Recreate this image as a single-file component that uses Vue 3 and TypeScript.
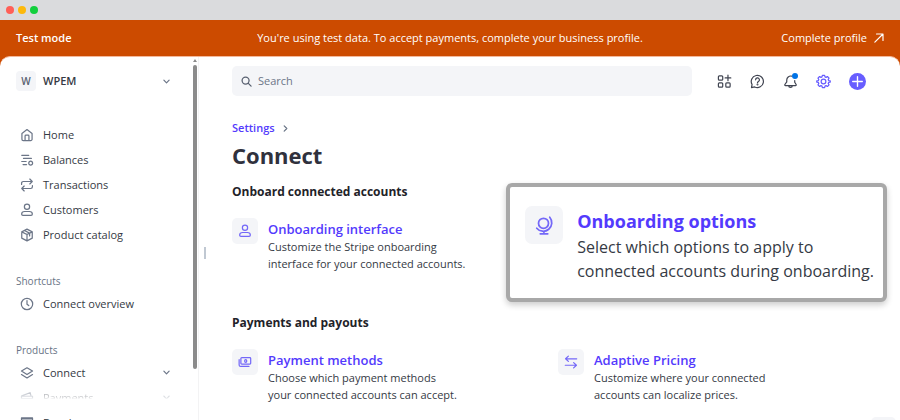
<script setup lang="ts">
import { ref } from 'vue'

interface NavItem {
  label: string
  icon: string
  expandable?: boolean
}

const icons: Record<string, string> = {
  home: 'M2.2 6.2 8 1.8l5.8 4.4v6.6a1.5 1.5 0 0 1-1.5 1.5H3.7a1.5 1.5 0 0 1-1.5-1.5zM5.8 14V9.2a1 1 0 0 1 1-1h2.4a1 1 0 0 1 1 1V14',
  balances: 'M2 2.7h8M4 6.2h9M2 9.7h5M3.5 13.2h4M14.4 11.6a2.2 2.2 0 1 1-4.4 0a2.2 2.2 0 1 1 4.4 0',
  transactions: 'M1.8 7.3V6a2 2 0 0 1 2-2h10M11.2 1.2 14 4l-2.8 2.8M14.2 8.7V10a2 2 0 0 1-2 2h-10M4.8 9.2 2 12l2.8 2.8',
  customer: 'M11 4.4a3 3 0 1 1-6 0a3 3 0 1 1 6 0M1.9 12.7c0-2 1.5-3 3.4-3h5.4c1.9 0 3.4 1 3.4 3c0 .9-.6 1.4-1.4 1.4H3.3c-.8 0-1.4-.5-1.4-1.4z',
  catalog: 'm8 1.3 6 3.1v7.2l-6 3.1-6-3.1V4.4zM2 4.4l6 3 6-3M8 7.4v7.1M5 2.9l6 3V9',
  clock: 'M14.5 8a6.5 6.5 0 1 1-13 0a6.5 6.5 0 1 1 13 0M8 4v4.2l2 1.6',
  layers: 'm8 2 6.3 3.8L8 9.6 1.7 5.8zM1.7 9.8 8 13.7l6.3-3.9',
  wallet: 'M2 5.5 11.5 2l1 3.3M1.7 6h12.6v7.5H1.7zM1.7 8.7h12.6',
  card: 'M1.7 2.2h12.6v11H1.7zM1.7 3h12.6M1.7 5h12.6',
  cash: 'M4.3 3h9.2a1 1 0 0 1 1 1v5.5a1 1 0 0 1-1 1H4.3a1 1 0 0 1-1-1V4a1 1 0 0 1 1-1M1.3 5.3v6a1.7 1.7 0 0 0 1.7 1.7h9.5M10 6.8a1.2 1.5 0 1 1-2.4 0a1.2 1.5 0 1 1 2.4 0',
  swap: 'M14.5 4.3H1.8M5 1.3 1.8 4.3l3.2 3M1.5 11.7h12.7M11 8.7l3.2 3-3.2 3',
  globe: 'M11.6 6.6a4 4 0 1 1-8 0a4 4 0 1 1 8 0M12.6 1.8A6.8 6.8 0 0 1 2.2 10.6M8 13v1.8M5 15h6',
}

const mainNav: NavItem[] = [
  { label: 'Home', icon: 'home' },
  { label: 'Balances', icon: 'balances' },
  { label: 'Transactions', icon: 'transactions' },
  { label: 'Customers', icon: 'customer' },
  { label: 'Product catalog', icon: 'catalog' },
]
const shortcuts: NavItem[] = [{ label: 'Connect overview', icon: 'clock' }]
const products: NavItem[] = [
  { label: 'Connect', icon: 'layers', expandable: true },
  { label: 'Payments', icon: 'wallet', expandable: true },
]
const groups = [
  { title: '', items: mainNav },
  { title: 'Shortcuts', items: shortcuts },
  { title: 'Products', items: products },
]
const query = ref('')
</script>

<template>
  <div class="window">
    <div class="chrome"><i class="red"></i><i class="yellow"></i><i class="green"></i></div>
    <header class="banner">
      <strong>Test mode</strong>
      <span class="notice">You're using test data. To accept payments, complete your business profile.</span>
      <a href="#profile">Complete profile
        <svg viewBox="0 0 12 12" width="10" height="10"><path d="M1 11 10.5 1.5M3 1.2h7.8V9" /></svg>
      </a>
    </header>
    <div class="app">
      <aside class="sidebar">
        <button class="account" type="button">
          <span class="avatar">W</span><span class="name">WPEM</span>
          <svg class="chev" viewBox="0 0 8 8" width="7" height="7"><path d="m1 2.5 3 3 3-3" /></svg>
        </button>
        <nav>
          <div v-for="group in groups" :key="group.title" class="group">
            <h2 v-if="group.title">{{ group.title }}</h2>
            <a v-for="item in group.items" :key="item.label" href="#nav" :class="{ fading: item.label === 'Payments' }">
              <svg viewBox="0 0 16 16" width="14" height="14"><path :d="icons[item.icon]" /></svg>
              <span>{{ item.label }}</span>
              <svg v-if="item.expandable" class="chev" viewBox="0 0 8 8" width="7" height="7"><path d="m1 2.5 3 3 3-3" /></svg>
            </a>
          </div>
        </nav>
        <a class="developers" href="#developers">
          <svg viewBox="0 0 16 16" width="14" height="14"><path :d="icons.card" /></svg>
          <span>Developers</span>
        </a>
      </aside>
      <div class="scrollbar"><span class="arrow"></span><span class="thumb"></span></div>
      <div class="splitter"></div>
      <main>
        <div class="toolbar">
          <label class="search">
            <svg viewBox="0 0 12 12" width="11" height="11"><circle cx="5" cy="5" r="3.8" /><path d="m8 8 3 3" /></svg>
            <input v-model="query" type="search" placeholder="Search" aria-label="Search" />
          </label>
          <div class="actions">
            <button type="button" aria-label="Apps">
              <svg viewBox="0 0 16 16" width="15" height="15"><rect x="1.5" y="2" width="4.6" height="4.6" rx="1" /><rect x="1.5" y="9.4" width="4.6" height="4.6" rx="1" /><rect x="9.4" y="9.4" width="4.6" height="4.6" rx="1" /><path d="M11.7 1.2v6M8.7 4.2h6" /></svg>
            </button>
            <button type="button" aria-label="Help">
              <svg viewBox="0 0 16 16" width="15" height="15"><path d="M2.2 11.2A6.5 6.5 0 1 1 5 13.8l-3.4.7zM6 6.2a2 2 0 1 1 3 1.7c-.7.4-1 .7-1 1.4" /><circle cx="8" cy="11.3" r=".4" /></svg>
            </button>
            <button class="bell" type="button" aria-label="Notifications">
              <svg viewBox="0 0 16 16" width="15" height="15"><path d="M9 2.2a4.3 4.3 0 0 0-5 4.2v2.1L2 11.2c-.3.6 0 1.1.6 1.1h10.8c.6 0 .9-.5.6-1.1l-1.5-2.4V7M6 12.4c.2 2.6 3.8 2.6 4 0" /></svg>
            </button>
            <button class="gear" type="button" aria-label="Settings">
              <svg viewBox="0 0 16 16" width="15" height="15"><path d="m6.8 1.4-.4 1.7-1.1.5-1.5-.9-1.7 1.7.9 1.5-.5 1.1-1.7.4v1.2l1.7.4.5 1.1-.9 1.5 1.7 1.7 1.5-.9 1.1.5.4 1.7h2.4l.4-1.7 1.1-.5 1.5.9 1.7-1.7-.9-1.5.5-1.1 1.7-.4V7.4L13.5 7 13 5.9l.9-1.5-1.7-1.7-1.5.9-1.1-.5-.4-1.7z" /><circle cx="8" cy="8" r="2.5" /></svg>
            </button>
            <button class="add" type="button" aria-label="Create">
              <svg viewBox="0 0 16 16" width="17" height="17"><circle cx="8" cy="8" r="8" /><path d="M8 3.5v9M3.5 8h9" /></svg>
            </button>
          </div>
        </div>

        <div class="crumbs">
          <a href="#settings">Settings</a>
          <svg viewBox="0 0 8 8" width="7" height="7"><path d="m2.5 1 3 3-3 3" /></svg>
        </div>
        <h1>Connect</h1>

        <section>
          <h3>Onboard connected accounts</h3>
          <div class="cards">
            <article class="card">
              <span class="tile"><svg viewBox="0 0 16 16" width="14" height="14"><path :d="icons.customer" /></svg></span>
              <div>
                <a href="#interface">Onboarding interface</a>
                <p>Customize the Stripe onboarding<br />interface for your connected accounts.</p>
              </div>
            </article>
          </div>
          <article class="card callout">
            <span class="tile"><svg viewBox="0 0 16 16" width="20" height="20"><path :d="icons.globe" /></svg></span>
            <div>
              <a href="#options">Onboarding options</a>
              <p>Select which options to apply to<br />connected accounts during onboarding.</p>
            </div>
          </article>
        </section>

        <section>
          <h3>Payments and payouts</h3>
          <div class="cards">
            <article class="card">
              <span class="tile"><svg viewBox="0 0 16 16" width="14" height="14"><path :d="icons.cash" /></svg></span>
              <div>
                <a href="#methods">Payment methods</a>
                <p>Choose which payment methods<br />your connected accounts can accept.</p>
              </div>
            </article>
            <article class="card">
              <span class="tile"><svg viewBox="0 0 16 16" width="14" height="14"><path :d="icons.swap" /></svg></span>
              <div>
                <a href="#pricing">Adaptive Pricing</a>
                <p>Customize where your connected<br />accounts can localize prices.</p>
              </div>
            </article>
          </div>
        </section>
        <div class="dock"></div>
      </main>
    </div>
  </div>
</template>

<style>
body {
  margin: 0;
}
</style>

<style scoped>
.window {
  display: flex;
  flex-direction: column;
  height: 100vh;
  overflow: hidden;
  background: #cc4b00;
  color: #353a44;
  font-family: "Open Sans", "Noto Sans", sans-serif;
  font-size: 11px;
  line-height: 16px;
}
h1, h2, h3, p {
  margin: 0;
}
a {
  color: inherit;
  text-decoration: none;
}
button {
  padding: 0;
  border: 0;
  background: none;
  color: inherit;
  font: inherit;
}
svg {
  display: block;
  flex: none;
  fill: none;
  stroke: currentColor;
  stroke-width: 1.4;
  stroke-linecap: round;
  stroke-linejoin: round;
}
.chrome {
  display: flex;
  flex: none;
  align-items: center;
  gap: 4px;
  height: 20px;
  padding-left: 6px;
  background: #dadbdd;
}
.chrome i {
  width: 8px;
  height: 8px;
  border-radius: 50%;
}
.red { background: #ff5f57; }
.yellow { background: #fdb90b; }
.green { background: #12cf3c; }
.banner {
  display: grid;
  grid-template-columns: 1fr auto 1fr;
  flex: none;
  align-items: center;
  height: 36px;
  padding: 0 16px;
  color: #fff;
}
.banner strong {
  font-weight: 600;
}
.banner a {
  display: flex;
  align-items: center;
  justify-content: flex-end;
  gap: 7px;
}
.app {
  display: flex;
  flex: 1;
  min-height: 0;
  overflow: hidden;
  border-top: 1px solid #f4b89a;
  border-radius: 10px 10px 0 0;
  background: #fff;
}
.sidebar {
  display: flex;
  flex: none;
  flex-direction: column;
  width: 192px;
}
.account {
  display: flex;
  align-items: center;
  gap: 7px;
  margin: 14px 22px 0 16px;
  text-align: left;
}
.avatar {
  display: grid;
  width: 20px;
  height: 20px;
  place-items: center;
  border-radius: 4px;
  background: #f4f5f8;
  color: #596171;
  font-size: 10px;
  font-weight: 600;
}
.name {
  font-weight: 600;
}
.chev {
  margin-left: auto;
  color: #6c7688;
}
nav {
  padding-top: 31px;
}
.group + .group {
  margin-top: 25px;
}
.group h2 {
  padding: 1px 16px 2px;
  color: #687385;
  font-size: 10px;
  font-weight: 400;
}
.group a,
.developers {
  display: flex;
  align-items: center;
  gap: 9px;
  height: 25px;
  padding: 0 22px 0 20px;
}
.group a > svg:first-child,
.developers svg {
  color: #6c7688;
}
.developers {
  padding-top: 5px;
}
.fading {
  -webkit-mask-image: linear-gradient(#0008 20%, #0003 50%, transparent 58%);
  mask-image: linear-gradient(#0008 20%, #0003 50%, transparent 58%);
}
.scrollbar {
  display: flex;
  flex: none;
  flex-direction: column;
  align-items: center;
  width: 6px;
  border-right: 1px solid #f3f3f4;
}
.arrow {
  margin: 2px 0 3px;
  border: 2px solid transparent;
  border-top: 0;
  border-bottom: 3px solid #8b8b8b;
}
.thumb {
  width: 4px;
  height: 304px;
  border-radius: 2px;
  background: #8b8b8b;
}
.splitter {
  flex: none;
  align-self: center;
  width: 2px;
  height: 12px;
  margin: 29px 0 0 5px;
  background: #c0c8d2;
}
main {
  position: relative;
  flex: 1;
  min-width: 0;
  padding: 9px 34px 0 26px;
}
.toolbar {
  display: flex;
  align-items: center;
  gap: 25px;
}
.search {
  display: flex;
  flex: 1;
  align-items: center;
  gap: 6px;
  height: 30px;
  padding: 0 9px;
  border-radius: 5px;
  background: #f4f5f8;
  color: #596171;
}
.search input {
  flex: 1;
  min-width: 0;
  padding: 0;
  border: 0;
  outline: 0;
  background: transparent;
  color: inherit;
  font: inherit;
}
.search input::placeholder {
  color: #6c7688;
  opacity: 1;
}
.actions {
  display: flex;
  align-items: center;
  gap: 18px;
  color: #414552;
}
.actions svg {
  stroke-width: 1.3;
}
.bell {
  position: relative;
}
.bell::after {
  position: absolute;
  top: -1px;
  right: 0;
  width: 6px;
  height: 6px;
  border-radius: 50%;
  background: #0073e6;
  content: "";
}
.actions .gear {
  color: #675dff;
}
.add circle {
  fill: #675dff;
  stroke: none;
}
.add path {
  stroke: #fff;
}
.crumbs {
  display: flex;
  align-items: center;
  gap: 7px;
  margin-top: 24px;
  color: #687385;
}
.crumbs a,
.card a {
  color: #533afd;
}
.crumbs a {
  font-weight: 600;
}
h1 {
  margin: 4px 0 14px;
  color: #30313d;
  font-size: 22px;
  font-weight: 700;
  line-height: 30px;
}
section {
  position: relative;
}
section + section {
  margin-top: 43px;
}
h3 {
  margin-bottom: 18px;
  color: #1f2329;
  font-size: 12px;
  font-weight: 700;
  line-height: 16px;
}
.cards {
  display: grid;
  grid-template-columns: 1fr 1fr;
  gap: 18px;
}
.card {
  display: flex;
  gap: 10px;
  white-space: nowrap;
}
.tile {
  display: grid;
  flex: none;
  width: 26px;
  height: 26px;
  place-items: center;
  border-radius: 5px;
  background: #f4f5f8;
  color: #7468f8;
}
.card a {
  display: block;
  padding-top: 2px;
  font-size: 13px;
  font-weight: 600;
  line-height: 18px;
}
.card p {
  line-height: 17px;
}
.callout {
  position: absolute;
  top: -1px;
  right: -21px;
  gap: 14px;
  padding: 19px 9px 15px 15px;
  border: 4px solid #a8a8a8;
  border-radius: 6px;
  background: #fff;
  box-shadow: 0 3px 6px #0003;
}
.callout .tile {
  width: 38px;
  height: 38px;
  border-radius: 7px;
}
.callout a {
  padding-top: 2px;
  font-size: 18px;
  font-weight: 700;
  line-height: 26px;
}
.callout p {
  padding-top: 1px;
  font-size: 16px;
  line-height: 24px;
}
.dock {
  position: absolute;
  right: 4px;
  bottom: -20px;
  width: 25px;
  height: 23px;
  border-radius: 5px;
  background: #f4f5f8;
}
</style>
